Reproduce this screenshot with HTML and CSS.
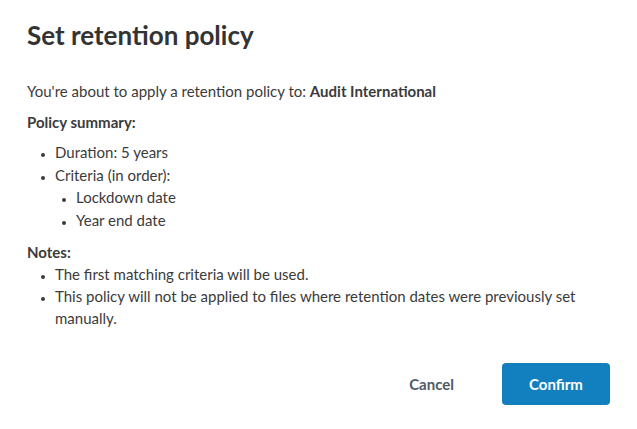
FILE: index.html
```html
<!DOCTYPE html>
<html lang="en">
<head>
<meta charset="utf-8">
<title>Set retention policy</title>
<link rel="stylesheet" href="styles.css">
</head>
<body>
<div class="dialog">
  <h1 class="title">Set retention policy</h1>
  <div class="body">
    <p class="intro">You're about to apply a retention policy to: <strong>Audit International</strong></p>
    <p class="label">Policy summary:</p>
    <ul class="list">
      <li>Duration: 5 years</li>
      <li>Criteria (in order):
        <ul class="sublist">
          <li>Lockdown date</li>
          <li>Year end date</li>
        </ul>
      </li>
    </ul>
    <p class="label notes-label">Notes:</p>
    <ul class="list notes-list">
      <li>The first matching criteria will be used.</li>
      <li>This policy will not be applied to files where retention dates were previously set manually.</li>
    </ul>
  </div>
  <div class="actions">
    <button class="btn btn-cancel" type="button">Cancel</button>
    <button class="btn btn-confirm" type="button">Confirm</button>
  </div>
</div>
</body>
</html>
```

FILE: styles.css
```css
html, body {
  margin: 0;
  padding: 0;
  background: #ffffff;
}
body {
  font-family: Lato, "Open Sans", sans-serif;
  color: #3b3b3b;
  width: 637px;
  height: 429px;
}
.dialog {
  padding: 19px 27px 0 27px;
  display: flex;
  flex-direction: column;
}
.title {
  margin: 0;
  font-size: 26px;
  line-height: 32px;
  font-weight: 700;
  color: #333333;
}
.body {
  margin-top: 29px;
  font-size: 15px;
  line-height: 22px;
}
.body p {
  margin: 0;
}
.intro {
  margin-bottom: 9px !important;
}
.label {
  font-weight: 700;
  margin-bottom: 8px !important;
}
.notes-label {
  margin-top: 10px !important;
  margin-bottom: 0 !important;
}
.list {
  margin: 0;
  padding-left: 28px;
}
.list li {
  line-height: 22.5px;
}
.notes-list li {
  line-height: 22px;
}
.list li::marker {
  font-size: 11px;
}
.sublist {
  margin: 0;
  padding-left: 21px;
  list-style-type: disc;
}
.actions {
  display: flex;
  justify-content: flex-end;
  align-items: center;
  gap: 24px;
  margin-top: 34px;
}
.btn {
  font-family: Lato, "Open Sans", sans-serif;
  font-size: 15px;
  font-weight: 700;
  height: 42px;
  border: none;
  border-radius: 4px;
  cursor: pointer;
}
.btn-cancel {
  background: transparent;
  color: #4f5b66;
  padding: 0 24px;
}
.btn-confirm {
  background: #127fbf;
  color: #ffffff;
  width: 108px;
}
```
